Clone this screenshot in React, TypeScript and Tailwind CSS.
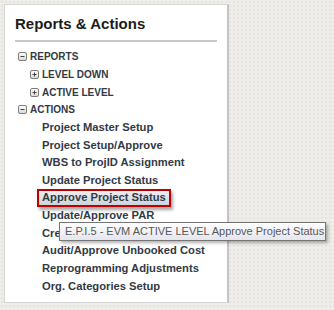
import React from 'react';

const Toggle: React.FC<{ open: boolean }> = ({ open }) => (
  <svg width="9" height="9" viewBox="0 0 9 9" className="shrink-0">
    <defs>
      <linearGradient id={open ? 'tg-o' : 'tg-c'} x1="0" y1="0" x2="0" y2="1">
        <stop offset="0" stopColor="#ffffff" />
        <stop offset="1" stopColor="#d8d8d8" />
      </linearGradient>
    </defs>
    <rect x="0.5" y="0.5" width="8" height="8" rx="1.5" fill={`url(#${open ? 'tg-o' : 'tg-c'})`} stroke="#7d7d7d" />
    <path d="M2.5 4.5h4" stroke="#444" strokeWidth="1" />
    {!open && <path d="M4.5 2.5v4" stroke="#444" strokeWidth="1" />}
  </svg>
);

const actions = [
  'Project Master Setup',
  'Project Setup/Approve',
  'WBS to ProjID Assignment',
  'Update Project Status',
  'Approve Project Status',
  'Update/Approve PAR',
  'Create Project',
  'Audit/Approve Unbooked Cost',
  'Reprogramming Adjustments',
  'Org. Categories Setup',
];

export default function App() {
  return (
    <div
      className="relative w-[334px] h-[310px] overflow-hidden bg-[#eeede9] bg-[radial-gradient(#dcd9d2_0.6px,transparent_0.8px)] bg-[size:4px_4px] pt-[4px] pl-[4px]"
      style={{ fontFamily: '"Liberation Sans", Arial, sans-serif' }}
    >
      <div className="w-[225px] h-[299px] bg-white border border-[#d6d6d6] border-r-2 border-r-[#c4c4c4] px-[10px] pt-[8.5px]">
        <h1 className="text-[15px] leading-[20px] font-bold text-[#1c1c1c]">Reports &amp; Actions</h1>
        <div className="mt-[6.5px] h-[2px] bg-[#c8c8c8]" />

        <div className="mt-[6.2px] flex flex-col text-[#323a45] font-bold">
          <div className="h-[17.62px] flex items-center gap-[3px] pl-[3px] text-[10px]">
            <Toggle open />
            <span>REPORTS</span>
          </div>
          <div className="h-[17.62px] flex items-center gap-[3px] pl-[15px] text-[10px]">
            <Toggle open={false} />
            <span>LEVEL DOWN</span>
          </div>
          <div className="h-[17.62px] flex items-center gap-[3px] pl-[15px] text-[10px]">
            <Toggle open={false} />
            <span>ACTIVE LEVEL</span>
          </div>
          <div className="h-[17.62px] flex items-center gap-[3px] pl-[3px] text-[10px]">
            <Toggle open />
            <span>ACTIONS</span>
          </div>
          {actions.map((a) => (
            <div key={a} className="h-[17.62px] flex items-center pl-[27px] text-[11.2px] whitespace-nowrap">
              {a === 'Approve Project Status' ? (
                <span className="-ml-[5px] h-[18px] flex items-center px-[3px] border-2 border-[#c00000] bg-gradient-to-b from-[#eef0f3] to-[#cdd3db] shadow-[2px_3px_3px_rgba(0,0,0,0.35)]">
                  {a}
                </span>
              ) : (
                <span>{a}</span>
              )}
            </div>
          ))}
        </div>
      </div>

      <div
        className="absolute left-[59px] top-[222px] w-[267px] h-[19px] flex items-center pl-[5px] border border-[#767676] bg-gradient-to-b from-white to-[#e4e5ee] text-[11px] text-[#575757] whitespace-nowrap shadow-[2px_2px_3px_rgba(0,0,0,0.3)]"
      >
        E.P.I.5 - EVM ACTIVE LEVEL Approve Project Status
      </div>
    </div>
  );
}
